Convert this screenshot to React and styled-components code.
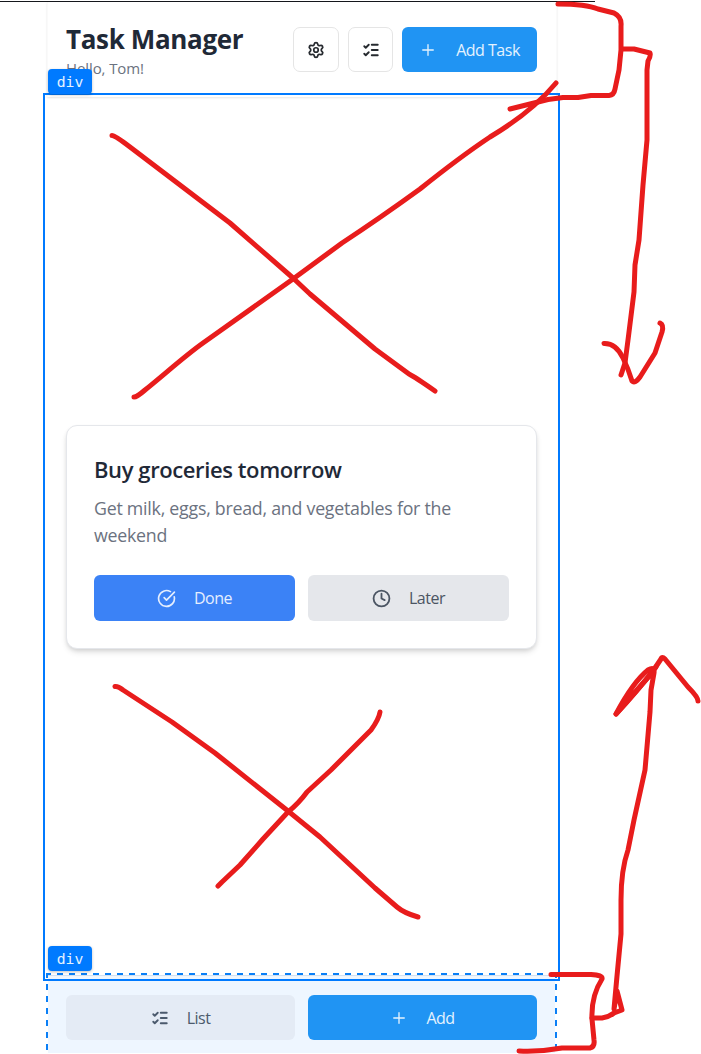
import React from "react";
import styled, { createGlobalStyle } from "styled-components";
import { Settings, ListChecks, Plus, CircleCheckBig, Clock } from "lucide-react";

const GlobalStyle = createGlobalStyle`
  *, *::before, *::after { box-sizing: border-box; }
  body {
    margin: 0;
    background: #fff;
    overflow: hidden;
    font-family: "Segoe UI", "Open Sans", "Noto Sans", sans-serif;
  }
  h1, h2, p { margin: 0; }
  button { font: inherit; margin: 0; padding: 0; }
`;

const Page = styled.div`
  position: relative;
  width: 701px;
  height: 1054px;
  overflow: hidden;
`;

const TopRule = styled.div`
  width: 595px;
  height: 2px;
  border-bottom: 1px solid #15171c;
`;

const Phone = styled.div`
  display: flex;
  flex-direction: column;
  width: 510px;
  height: 1051px;
  margin-left: 47px;
`;

const Header = styled.header`
  display: flex;
  justify-content: space-between;
  align-items: flex-start;
  height: 95px;
  padding: 20px 19px 0 18px;
  border: 1px solid #fafafa;
  border-width: 0 1px;
  box-shadow: 0 1px 2px rgba(0, 0, 0, 0.1);
`;

const Title = styled.h1`
  font-size: 26px;
  font-weight: 700;
  line-height: 34px;
  letter-spacing: -0.35px;
  color: #1f2937;
  white-space: nowrap;
`;

const Greeting = styled.p`
  margin-top: 2px;
  font-size: 15px;
  line-height: 20px;
  letter-spacing: -0.1px;
  color: #6b7280;
`;

const Actions = styled.div`
  display: flex;
  gap: 9px;
  padding-top: 5px;
`;

const IconButton = styled.button`
  display: flex;
  align-items: center;
  justify-content: center;
  width: ${(p) => p.$width || 45}px;
  height: 45px;
  border: 1px solid #e5e5e5;
  border-radius: 7px;
  background: #fff;
  color: #262a2f;
`;

const tones = {
  sky: ["#2094f3", "#e4f2fe"],
  blue: ["#3b82f6", "#e5eefe"],
  gray: ["#e5e7eb", "#4b5563"],
  mist: ["#e4ebf5", "#4b5a6d"],
};

const Button = styled.button`
  display: flex;
  align-items: center;
  justify-content: center;
  gap: ${(p) => p.$gap || 18}px;
  flex: ${(p) => (p.$width ? "none" : "1 1 0")};
  width: ${(p) => (p.$width ? `${p.$width}px` : "auto")};
  height: ${(p) => p.$height || 45}px;
  border: 0;
  border-radius: 6px;
  background: ${(p) => tones[p.$tone][0]};
  color: ${(p) => tones[p.$tone][1]};
  font-size: 16px;
  letter-spacing: -0.5px;
  white-space: nowrap;
`;

const Main = styled.main`
  display: flex;
  flex: 1;
  align-items: center;
  padding: 2px 20px 0 19px;
`;

const Card = styled.article`
  width: 100%;
  height: 224px;
  padding: 28px 27px 0;
  border: 1px solid #e5e7eb;
  border-radius: 11px;
  background: #fff;
  box-shadow: 0 4px 6px -1px rgba(0, 0, 0, 0.12), 0 2px 4px -1px rgba(0, 0, 0, 0.1);
`;

const CardTitle = styled.h2`
  font-size: 22px;
  font-weight: 600;
  line-height: 30px;
  letter-spacing: -0.4px;
  color: #1f2937;
`;

const CardText = styled.p`
  margin: 11px 0 26px;
  font-size: 17.8px;
  line-height: 27px;
  letter-spacing: -0.25px;
  color: #6b7280;
  white-space: nowrap;
`;

const ButtonRow = styled.div`
  display: flex;
  gap: 13px;
`;

const Footer = styled.footer`
  height: 78px;
  margin: 0 2px 0 1px;
  padding: 19px 18px 0;
  border-top: 1px solid #d3e0ee;
  background: #eef6ff;
`;

const Selection = styled.div`
  position: absolute;
  left: 43px;
  top: 93px;
  width: 517px;
  height: 888px;
  border: 2px solid #007aff;
`;

const DropZone = styled.div`
  position: absolute;
  left: 46px;
  top: 973px;
  width: 511px;
  height: 80px;
  --dash: #0a7ff6 0 6px, transparent 6px 12px;
  background:
    repeating-linear-gradient(90deg, var(--dash)) -1px 0 / 512px 2px no-repeat,
    repeating-linear-gradient(180deg, var(--dash)) 0 -1px / 2px 81px no-repeat,
    repeating-linear-gradient(180deg, var(--dash)) 100% -1px / 2px 81px no-repeat;
`;

const Tag = styled.span`
  position: absolute;
  left: 48px;
  top: ${(p) => p.$top}px;
  width: 44px;
  height: 25px;
  border-radius: 4px;
  background: #007aff;
  color: #e4f2ff;
  font: 14.8px/26px "DejaVu Sans Mono", monospace;
  text-align: center;
  box-shadow: 0 1px 3px rgba(0, 0, 0, 0.25);
`;

const Ink = styled.svg`
  position: absolute;
  inset: 0;
  fill: none;
  stroke: #e81c1c;
  stroke-width: 5;
  stroke-linecap: round;
  stroke-linejoin: round;
`;

const strokes = [
  "M112 135.500Q115 135.500 130 147L230 223L293 278L310 294L375 349L409 374Q415 377 435 391",
  "M134 397Q137 397 145 390C166 373 186 355 203 343L293 279L342 243Q380 218 420 189Q460 157 490 137Q532 112 556 83",
  "M115 686.500Q118 686 123 690L172 722L215 753L288 811L320 837L375 888L397 907Q404 913 418 917",
  "M380 712Q379 719 371 730L331 770L307 792Q299 803 288 812L263 839L240 865L222 882L218 886",
  "M558 4Q586 4 598 9L614 13Q622 17 621 26V50L619 70L615 89Q614 95 609 95.500H591L578 97.500H563L548 99.500L510 109",
  "M622 49H634L650 53Q651 56 648 61L647 70V140L643 185L639 240L635 265L634 292L628 340L625 363L621 375",
  "M604 343.500Q616 343 623 358Q628 368 632 381Q635 384 640 377L655 353L662 332Q664 325 660 323",
  "M551 974.500H591Q603 975 602 979Q591 996 592 1019L594 1040Q595 1047 590 1048H562Q540 1052 519 1051",
  "M592 1018H602Q609 1017 614 1013L622 1010L617 991L614 1009L617 976L621 934V900Q621 870 628 850L634 820L645 770L650 712L651 690L654 673Q655 666 648 670Q633 682 616 714L651 674L661 659Q662 656 665 659L688 687Q698 697 698 701",
  "M616 714Q636 693 656 667",
];

export default function App() {
  return (
    <>
      <GlobalStyle />
      <Page>
        <TopRule />
        <Phone>
          <Header>
            <div>
              <Title>Task Manager</Title>
              <Greeting>Hello, Tom!</Greeting>
            </div>
            <Actions>
              <IconButton $width={46}><Settings size={18} strokeWidth={2.3} /></IconButton>
              <IconButton><ListChecks size={18} strokeWidth={2.5} /></IconButton>
              <Button $tone="sky" $width={135} $gap={19}><Plus size={18} strokeWidth={1.8} />Add Task</Button>
            </Actions>
          </Header>
          <Main>
            <Card>
              <CardTitle>Buy groceries tomorrow</CardTitle>
              <CardText>Get milk, eggs, bread, and vegetables for the<br />weekend</CardText>
              <ButtonRow>
                <Button $tone="blue" $height={46}><CircleCheckBig size={19} strokeWidth={2.1} />Done</Button>
                <Button $tone="gray" $height={46}><Clock size={19} strokeWidth={2.3} />Later</Button>
              </ButtonRow>
            </Card>
          </Main>
          <Footer>
            <ButtonRow>
              <Button $tone="mist"><ListChecks size={18} strokeWidth={2.5} />List</Button>
              <Button $tone="sky"><Plus size={18} strokeWidth={1.8} />Add</Button>
            </ButtonRow>
          </Footer>
        </Phone>
        <DropZone />
        <Selection />
        <Tag $top={69}>div</Tag>
        <Tag $top={946}>div</Tag>
        <Ink width="701" height="1054" viewBox="0 0 701 1054">
          {strokes.map((d) => <path key={d} d={d} />)}
        </Ink>
      </Page>
    </>
  );
}
